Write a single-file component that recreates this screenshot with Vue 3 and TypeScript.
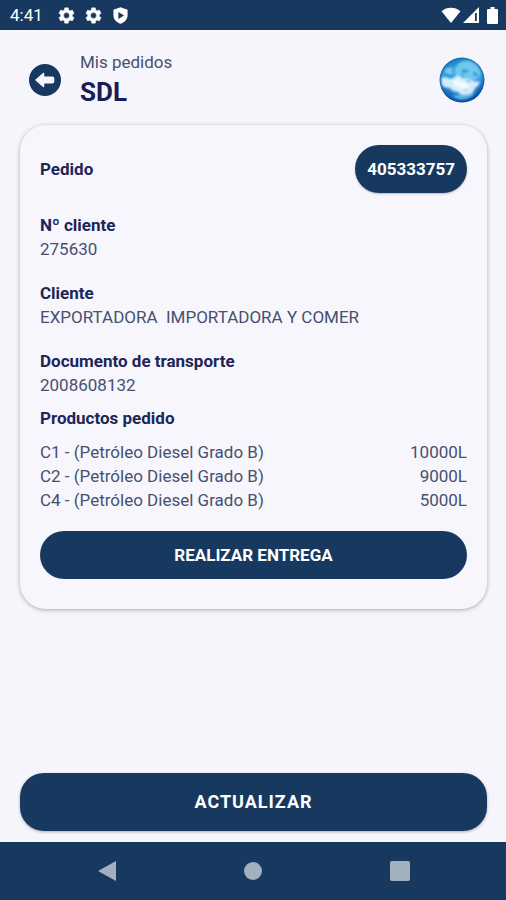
<script setup lang="ts">
interface Field {
  label: string
  value: string
}

interface Product {
  code: string
  name: string
  quantity: string
}

const orderNumber = '405333757'

const fields: Field[] = [
  { label: 'Nº cliente', value: '275630' },
  { label: 'Cliente', value: 'EXPORTADORA  IMPORTADORA Y COMER' },
  { label: 'Documento de transporte', value: '2008608132' },
]

const products: Product[] = [
  { code: 'C1', name: 'Petróleo Diesel Grado B', quantity: '10000L' },
  { code: 'C2', name: 'Petróleo Diesel Grado B', quantity: '9000L' },
  { code: 'C4', name: 'Petróleo Diesel Grado B', quantity: '5000L' },
]

const gearPath =
  'M19.14 12.94c.04-.3.06-.61.06-.94 0-.32-.02-.64-.07-.94l2.03-1.58a.49.49 0 0 0 .12-.61l-1.92-3.32a.49.49 0 0 0-.59-.22l-2.39.96c-.5-.38-1.03-.7-1.62-.94l-.36-2.54a.48.48 0 0 0-.48-.41h-3.84a.47.47 0 0 0-.47.41l-.36 2.54c-.59.24-1.13.57-1.62.94l-2.39-.96a.48.48 0 0 0-.59.22L2.74 8.87a.47.47 0 0 0 .12.61l2.03 1.58c-.05.3-.09.63-.09.94s.02.64.07.94l-2.03 1.58a.49.49 0 0 0-.12.61l1.92 3.32c.12.22.37.29.59.22l2.39-.96c.5.38 1.03.7 1.62.94l.36 2.54c.05.24.24.41.48.41h3.84c.24 0 .44-.17.47-.41l.36-2.54c.59-.24 1.13-.56 1.62-.94l2.39.96c.22.08.47 0 .59-.22l1.92-3.32a.47.47 0 0 0-.12-.61zM12 15.6A3.6 3.6 0 1 1 12 8.4a3.6 3.6 0 0 1 0 7.2z'
</script>

<template>
  <div class="screen">
    <div class="status-bar">
      <div class="status-group">
        <span class="clock">4:41</span>
        <svg v-for="n in 2" :key="n" class="status-icon" viewBox="1.500 1.500 21 21" aria-hidden="true">
          <path :d="gearPath" fill="#fff" stroke="#fff" stroke-width="0.500" />
        </svg>
        <svg class="status-icon" viewBox="0 0 24 24" aria-hidden="true">
          <path fill="#fff" fill-rule="evenodd" d="M12 0.500 22 4v7.500c0 5.500-4 10-10 12-6-2-10-6.500-10-12V4zM9 7v10l8-5z" />
        </svg>
      </div>
      <div class="status-group signals">
        <svg class="wifi" viewBox="0 0 20 16" aria-hidden="true">
          <path fill="#fff" d="M0.500 4.200C6 -0.400 14 -0.400 19.500 4.200L10 16z" />
        </svg>
        <svg class="cell" viewBox="0 0 16 16" aria-hidden="true">
          <path fill="#fff" fill-rule="evenodd" d="M16 0v16H0zM12 6v8h1.800V6z" />
        </svg>
        <svg class="battery" viewBox="0 0 11 17" aria-hidden="true">
          <path fill="#fff" d="M3.500 0h4v2H10a1 1 0 0 1 1 1v13a1 1 0 0 1-1 1H1a1 1 0 0 1-1-1V3a1 1 0 0 1 1-1h2.500z" />
        </svg>
      </div>
    </div>

    <header class="header">
      <button class="back" type="button" aria-label="Volver">
        <svg viewBox="0 0 32 32" aria-hidden="true">
          <circle cx="16" cy="16" r="16" fill="#18395f" />
          <path
            d="M7 16 14.500 9.500v3.700h9q1 0 1 1v3.600q0 1-1 1h-9v3.700z"
            fill="#f6f5fb"
            stroke="#f6f5fb"
            stroke-width="1.500"
            stroke-linejoin="round"
          />
        </svg>
      </button>
      <div class="titles">
        <span class="subtitle">Mis pedidos</span>
        <h1>SDL</h1>
      </div>
      <svg class="globe" viewBox="0 0 46 46" aria-hidden="true">
        <defs>
          <linearGradient id="sky" x1="0.200" y1="0" x2="0.500" y2="1">
            <stop offset="0" stop-color="#1873bb" />
            <stop offset="0.300" stop-color="#2ea3dc" />
            <stop offset="0.600" stop-color="#349bdc" />
            <stop offset="1" stop-color="#0a57b5" />
          </linearGradient>
          <radialGradient id="rim" cx="0.500" cy="0.480" r="0.520">
            <stop offset="0.820" stop-color="#0a4a9c" stop-opacity="0" />
            <stop offset="1" stop-color="#0a4090" stop-opacity="0.850" />
          </radialGradient>
          <clipPath id="disc"><circle cx="23" cy="23" r="22.500" /></clipPath>
          <filter id="soft" x="-20%" y="-20%" width="140%" height="140%">
            <feGaussianBlur stdDeviation="0.900" />
          </filter>
        </defs>
        <g clip-path="url(#disc)">
          <rect width="46" height="46" fill="url(#sky)" />
          <g filter="url(#soft)">
            <path fill="#7fd3f2" opacity="0.800" d="M18 8q5-5 13-4 8 3 11 12-2 6-8 8-8 0-9-6-5 0-8 2-3-7 1-12z" />
            <path fill="#1b83c8" opacity="0.700" d="M22 14q4-4 8 0l-3 2-4 0zM34 15q4 0 6 4-4 1-6-1z" />
            <path fill="#8fd0f0" opacity="0.900" d="M5 14q3-4 10-3l-4 3q4 1 3 3-5 1-9-3z" />
            <path fill="#d3ecfa" d="M2 21q5-2 9 1 4-1 6-3 4-1 7 2 5-1 9 3 5 1 8 0-1 5-5 7-1 6-8 7-6 1-9-3-5 0-8-4-5 0-9-3z" />
            <path fill="#f5fbfe" opacity="0.900" d="M14 24q5-3 8 1 5-1 8 3l-2 6q-6 1-9-4-6-1-5-6z" />
            <path fill="#66b7e7" opacity="0.800" d="M26 22q4 0 6 4-4 0-6-4zM21 31q4 2 9 1-3 4-9-1z" />
            <path fill="#1668b9" opacity="0.650" d="M3 30q5-1 8 4 3 3 6 4l-6 2q-6-4-8-10zM36 31l5-3-2 8z" />
            <path fill="#62bfe9" opacity="0.850" d="M14 39q8-3 13 0 5-3 9-3-5 7-13 7-6 0-9-4z" />
          </g>
          <circle cx="23" cy="23" r="22.500" fill="url(#rim)" />
        </g>
      </svg>
    </header>

    <main class="content">
      <section class="card">
        <div class="order-row">
          <span class="label">Pedido</span>
          <span class="badge">{{ orderNumber }}</span>
        </div>
        <dl class="fields">
          <div v-for="field in fields" :key="field.label">
            <dt class="label">{{ field.label }}</dt>
            <dd class="value">{{ field.value }}</dd>
          </div>
        </dl>
        <h2 class="label products-title">Productos pedido</h2>
        <ul class="products">
          <li v-for="product in products" :key="product.code">
            <span>{{ product.code }} - ({{ product.name }})</span>
            <span>{{ product.quantity }}</span>
          </li>
        </ul>
        <button class="deliver" type="button">REALIZAR ENTREGA</button>
      </section>
      <button class="refresh" type="button">ACTUALIZAR</button>
    </main>

    <nav class="system-nav">
      <button type="button" aria-label="Atrás">
        <svg viewBox="0 0 20 22" aria-hidden="true"><path d="M19 1v20L1 11z" /></svg>
      </button>
      <button type="button" aria-label="Inicio">
        <svg viewBox="0 0 20 22" aria-hidden="true"><circle cx="10" cy="11" r="9" /></svg>
      </button>
      <button type="button" aria-label="Recientes">
        <svg viewBox="0 0 20 22" aria-hidden="true"><rect y="1" width="20" height="20" rx="2" /></svg>
      </button>
    </nav>
  </div>
</template>

<style>
body {
  margin: 0;
  background: #f6f5fb;
}
</style>

<style scoped>
.screen {
  display: flex;
  flex-direction: column;
  min-height: 100vh;
  background: #f6f5fb;
  color: #46506f;
  font-family: Roboto, "Liberation Sans", sans-serif;
  font-size: 17px;
  line-height: 24px;
}

button {
  border: 0;
  padding: 0;
  font: inherit;
  cursor: pointer;
}

.status-bar {
  display: flex;
  align-items: center;
  justify-content: space-between;
  height: 30px;
  padding: 0 8px 0 10px;
  background: #18395f;
  color: #fff;
}

.status-group {
  display: flex;
  align-items: center;
  gap: 10px;
}

.signals {
  gap: 2px;
}

.clock {
  margin-right: 5px;
}

.status-icon {
  width: 17px;
  height: 17px;
}

.wifi {
  width: 20px;
  height: 16px;
}

.cell {
  width: 16px;
  height: 16px;
}

.battery {
  width: 11px;
  height: 17px;
  margin-left: 6px;
}

.header {
  display: flex;
  align-items: center;
  padding: 20px 21px 15px 29px;
}

.back {
  width: 32px;
  height: 32px;
  border-radius: 50%;
  background: none;
}

.back svg {
  display: block;
}

.titles {
  display: flex;
  flex: 1;
  flex-direction: column;
  margin-left: 19px;
}

.subtitle {
  line-height: 25px;
}

h1 {
  margin: 0;
  color: #1b1b57;
  font-size: 26px;
  font-weight: 700;
  line-height: 35px;
}

.globe {
  width: 46px;
  height: 46px;
}

.content {
  display: flex;
  flex: 1;
  flex-direction: column;
  justify-content: space-between;
  gap: 24px;
  padding: 0 19px 11px 20px;
}

.card {
  padding: 20px 20px 30px;
  border-radius: 26px;
  background: #f7f6fc;
  box-shadow: 0 1px 4px rgba(0, 0, 0, 0.3);
}

.label {
  margin: 0;
  color: #1c2658;
  font-size: 17px;
  font-weight: 700;
}

.order-row {
  display: flex;
  align-items: center;
  justify-content: space-between;
}

.badge {
  padding: 12px;
  border-radius: 24px;
  background: #18395f;
  box-shadow: 0 1px 2px rgba(0, 0, 0, 0.25);
  color: #fff;
  font-weight: 700;
}

.fields {
  display: grid;
  gap: 20px;
  margin: 20px 0 9px;
}

.value {
  margin: 0;
  white-space: pre-wrap;
}

.products {
  margin: 10px 0 19px;
  padding: 0;
  list-style: none;
}

.products li {
  display: flex;
  justify-content: space-between;
}

.deliver,
.refresh {
  display: block;
  width: 100%;
  background: #18395f;
  color: #fff;
  font-weight: 700;
}

.deliver {
  height: 48px;
  border-radius: 24px;
}

.refresh {
  height: 58px;
  border-radius: 24px;
  box-shadow: 0 1px 3px rgba(0, 0, 0, 0.3);
  font-size: 18px;
  letter-spacing: 1px;
}

.system-nav {
  display: flex;
  align-items: center;
  justify-content: space-evenly;
  height: 58px;
  background: #18395f;
}

.system-nav button {
  width: 48px;
  height: 48px;
  margin: 0 16px;
  background: none;
}

.system-nav svg {
  display: block;
  width: 20px;
  height: 22px;
  margin: 0 auto;
  fill: #a3b0bf;
}
</style>
